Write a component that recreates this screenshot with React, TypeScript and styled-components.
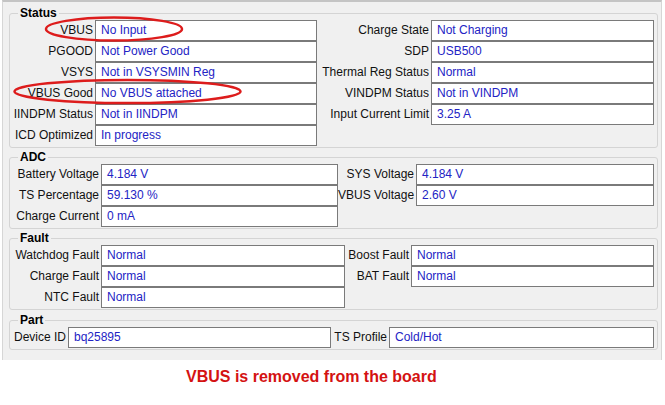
import React from "react";
import styled, { createGlobalStyle } from "styled-components";

const GlobalStyle = createGlobalStyle`
  html, body {
    margin: 0;
    padding: 0;
    background: #ffffff;
  }
  body {
    font-family: "Liberation Sans", Arial, sans-serif;
    font-size: 12px;
    color: #000;
  }
`;

const Page = styled.div`
  position: relative;
  width: 665px;
  height: 405px;
  overflow: hidden;
`;

const Panel = styled.div`
  background: #f0f0f0;
  border-top: 2px solid #c4c4c4;
  border-left: 1px solid #d6d6d6;
  border-right: 1px solid #d6d6d6;
  margin: 0 3px 0 2px;
  padding: 4px 3px 10px 6px;
  display: flex;
  flex-direction: column;
  gap: 1px;
`;

const Group = styled.fieldset<{ $top?: number }>`
  margin: ${(p) => p.$top ?? 0}px 0 0 0;
  padding: 0 0 1px 0;
  border: 1px solid #d4d4d4;
  border-radius: 3px;
  min-width: 0;
`;

const Legend = styled.legend`
  font-weight: bold;
  font-size: 12px;
  line-height: 14px;
  padding: 0 2px;
  margin-left: 8px;
`;

const Grid = styled.div<{ $cols: string }>`
  display: grid;
  grid-template-columns: ${(p) => p.$cols};
  grid-auto-rows: 21px;
  align-items: stretch;
`;

const Label = styled.div`
  text-align: right;
  padding-right: 2px;
  line-height: 21px;
  white-space: nowrap;
  color: #111;
`;

const Value = styled.div`
  background: #fff;
  border: 1px solid #7a7a7a;
  box-sizing: border-box;
  color: #2323c4;
  line-height: 19px;
  padding-left: 5px;
  white-space: nowrap;
`;

const Empty = styled.div``;

const Caption = styled.div`
  padding: 8px 0 0 186px;
  font-weight: bold;
  font-size: 16px;
  color: #d41212;
  font-family: "Liberation Sans", Arial, sans-serif;
`;

const Marks = styled.svg`
  position: absolute;
  left: 0;
  top: 0;
  pointer-events: none;
`;

type Cell = [string, string] | null;

const Rows = ({ cols, rows }: { cols: string; rows: [Cell, Cell][] }) => (
  <Grid $cols={cols}>
    {rows.map(([a, b], i) => (
      <React.Fragment key={i}>
        {a ? (
          <>
            <Label>{a[0]}</Label>
            <Value>{a[1]}</Value>
          </>
        ) : (
          <>
            <Empty />
            <Empty />
          </>
        )}
        {b ? (
          <>
            <Label>{b[0]}</Label>
            <Value>{b[1]}</Value>
          </>
        ) : (
          <>
            <Empty />
            <Empty />
          </>
        )}
      </React.Fragment>
    ))}
  </Grid>
);

const statusRows: [Cell, Cell][] = [
  [["VBUS", "No Input"], ["Charge State", "Not Charging"]],
  [["PGOOD", "Not Power Good"], ["SDP", "USB500"]],
  [["VSYS", "Not in VSYSMIN Reg"], ["Thermal Reg Status", "Normal"]],
  [["VBUS Good", "No VBUS attached"], ["VINDPM Status", "Not in VINDPM"]],
  [["IINDPM Status", "Not in IINDPM"], ["Input Current Limit", "3.25 A"]],
  [["ICD Optimized", "In progress"], null],
];

const adcRows: [Cell, Cell][] = [
  [["Battery Voltage", "4.184 V"], ["SYS Voltage", "4.184 V"]],
  [["TS Percentage", "59.130 %"], ["VBUS Voltage", "2.60 V"]],
  [["Charge Current", "0 mA"], null],
];

const faultRows: [Cell, Cell][] = [
  [["Watchdog Fault", "Normal"], ["Boost Fault", "Normal"]],
  [["Charge Fault", "Normal"], ["BAT Fault", "Normal"]],
  [["NTC Fault", "Normal"], null],
];

const partRows: [Cell, Cell][] = [
  [["Device ID", "bq25895"], ["TS Profile", "Cold/Hot"]],
];

export default function App() {
  return (
    <Page>
      <GlobalStyle />
      <Panel>
        <Group>
          <Legend>Status</Legend>
          <Rows cols="85px 222px 114px 223px" rows={statusRows} />
        </Group>
        <Group $top={1}>
          <Legend>ADC</Legend>
          <Rows cols="91px 237px 78px 238px" rows={adcRows} />
        </Group>
        <Group $top={1}>
          <Legend>Fault</Legend>
          <Rows cols="91px 244px 66px 243px" rows={faultRows} />
        </Group>
        <Group $top={2}>
          <Legend>Part</Legend>
          <Rows cols="58px 263px 58px 265px" rows={partRows} />
        </Group>
      </Panel>
      <Caption>VBUS is removed from the board</Caption>
      <Marks width="665" height="405">
        <ellipse cx="114" cy="29" rx="68" ry="11.5" fill="none" stroke="#dd1c1c" strokeWidth="2.5" />
        <ellipse cx="127.5" cy="91.5" rx="113" ry="11.5" fill="none" stroke="#dd1c1c" strokeWidth="2.5" />
      </Marks>
    </Page>
  );
}
